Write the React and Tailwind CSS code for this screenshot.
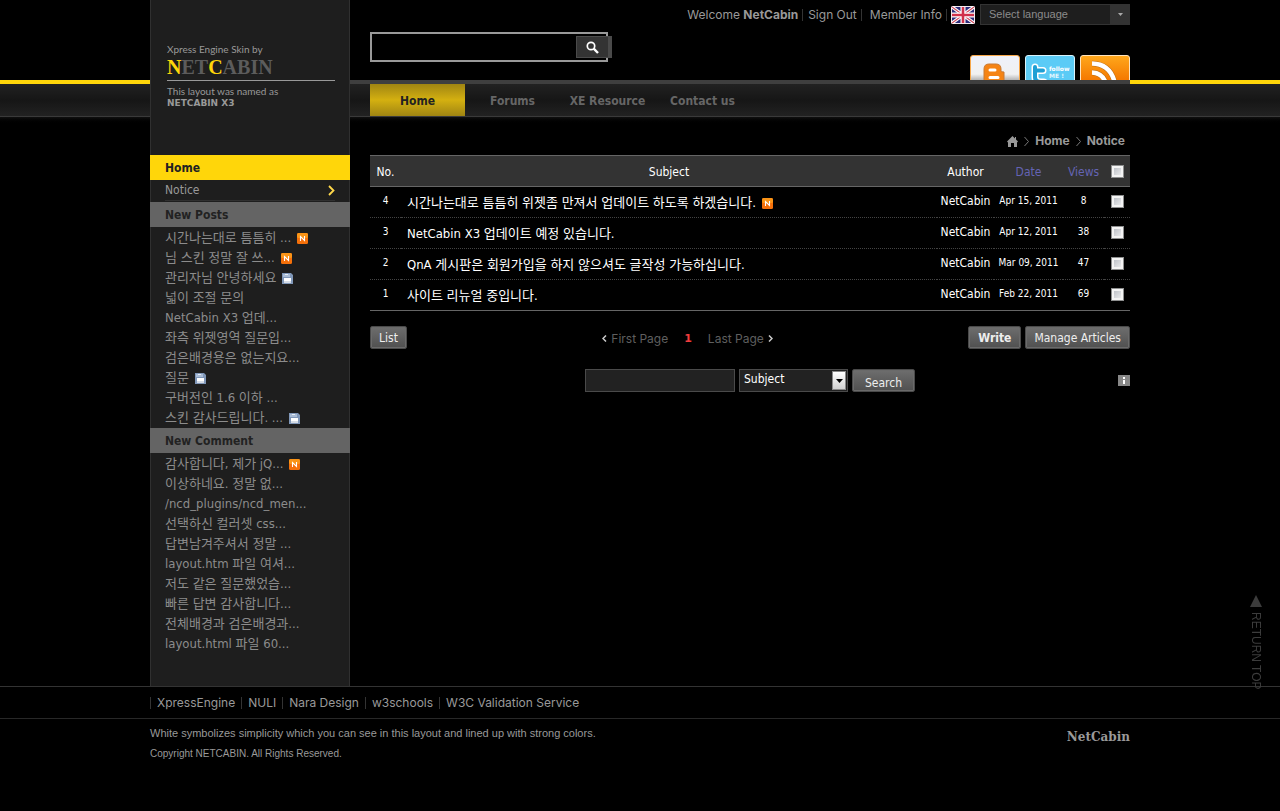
import { useState } from "react"

const newPosts = [
  { text: "시간나는대로 틈틈히 ...", icon: "new" },
  { text: "님 스킨 정말 잘 쓰...", icon: "new" },
  { text: "관리자님 안녕하세요", icon: "file" },
  { text: "넓이 조절 문의" },
  { text: "NetCabin X3 업데..." },
  { text: "좌측 위젯영역 질문입..." },
  { text: "검은배경용은 없는지요..." },
  { text: "질문", icon: "file" },
  { text: "구버전인 1.6 이하 ..." },
  { text: "스킨 감사드립니다. ...", icon: "file" },
]

const newComments = [
  { text: "감사합니다, 제가 jQ...", icon: "new" },
  { text: "이상하네요. 정말 없..." },
  { text: "/ncd_plugins/ncd_men..." },
  { text: "선택하신 컬러셋 css..." },
  { text: "답변남겨주셔서 정말 ..." },
  { text: "layout.htm 파일 여셔..." },
  { text: "저도 같은 질문했었습..." },
  { text: "빠른 답변 감사합니다..." },
  { text: "전체배경과 검은배경과..." },
  { text: "layout.html 파일 60..." },
]

const articles = [
  { no: 4, subject: "시간나는대로 틈틈히 위젯좀 만져서 업데이트 하도록 하겠습니다.", date: "Apr 15, 2011", views: 8, isNew: true },
  { no: 3, subject: "NetCabin X3 업데이트 예정 있습니다.", date: "Apr 12, 2011", views: 38 },
  { no: 2, subject: "QnA 게시판은 회원가입을 하지 않으셔도 글작성 가능하십니다.", date: "Mar 09, 2011", views: 47 },
  { no: 1, subject: "사이트 리뉴얼 중입니다.", date: "Feb 22, 2011", views: 69 },
]

const footerLinks = ["XpressEngine", "NULI", "Nara Design", "w3schools", "W3C Validation Service"]

const checkClass =
  "block size-[13px] appearance-none border border-[#8e8f8f] bg-linear-to-br from-[#b4b8bf] to-[#f6f6f6] shadow-[inset_0_0_0_2px_#f4f4f4] checked:from-[#333] checked:to-[#333]"

const buttonClass =
  "h-[23px] rounded-[2px] border border-[#4a4a4a] bg-linear-to-b from-[#6e6e6e] to-[#505050] text-xs leading-5 text-[#eee] shadow-[inset_0_0_0_1px_#6a6a6a]"

function NewIcon() {
  return (
    <svg className="size-[11px] shrink-0" viewBox="0 0 11 11" aria-hidden="true">
      <rect width="11" height="11" rx="1.5" fill="#f5700a" />
      <rect width="11" height="5" rx="1.5" fill="#fa9417" />
      <path d="M3.500 8V3.500L7.500 7.500V3" fill="none" stroke="#fff" strokeWidth="1.1" />
    </svg>
  )
}

function FileIcon() {
  return (
    <svg className="size-[11px] shrink-0" viewBox="0 0 11 11" aria-hidden="true">
      <path d="M0 0h9l2 2v9H0z" fill="#8097b8" />
      <path d="M1 1h7v3H1z" fill="#a9bcd6" />
      <path d="M3 1h3v1H3z" fill="#e6edf6" />
      <path d="M2 5h7v5H2z" fill="#fff" />
      <path d="M2 8h7v2H2z" fill="#d5dce6" />
    </svg>
  )
}

function Flag() {
  return (
    <svg className="h-[18px] w-6" viewBox="0 0 24 18" role="img" aria-label="English">
      <rect width="24" height="18" rx="1.5" fill="#f4e9ee" />
      <rect x="1" y="1" width="22" height="16" fill="#2b2b7a" />
      <path d="M1 1l22 16M23 1L1 17" stroke="#fff" strokeWidth="3.4" />
      <path d="M1 1l22 16M23 1L1 17" stroke="#cf4a5e" strokeWidth="1.1" />
      <path d="M12 1v16M1 9h22" stroke="#fff" strokeWidth="5" />
      <path d="M12 1v16M1 9h22" stroke="#d0304a" strokeWidth="2.6" />
    </svg>
  )
}

function SocialLinks() {
  return (
    <div className="flex h-[25px] gap-[5px] overflow-hidden">
      <a href="#blog" aria-label="Blog">
        <svg className="h-[25px] w-[50px]" viewBox="0 0 50 25">
          <defs>
            <linearGradient id="blog" x1="0" y1="0" x2="0" y2="1">
              <stop offset="0" stopColor="#eef1fa" />
              <stop offset="0.55" stopColor="#f1f1f1" />
              <stop offset="0.75" stopColor="#a9a9a9" />
            </linearGradient>
          </defs>
          <rect x="0.5" y="0.5" width="49" height="34" rx="2.5" fill="url(#blog)" stroke="#f6a74a" />
          <path d="M14 28V14q0-5 5-5h7q5 0 5 5v2q0 1 3 1v11z" fill="#f58414" stroke="#c87a35" />
          <path d="M20 15h5M20 22.500h8" stroke="#fff" strokeWidth="3" strokeLinecap="round" />
        </svg>
      </a>
      <a href="#twitter" aria-label="Twitter">
        <svg className="h-[25px] w-[50px]" viewBox="0 0 50 25">
          <rect x="0.5" y="0.5" width="49" height="34" rx="2.5" fill="#5bcbf6" stroke="#d8f2fb" />
          <path d="M10 12v10q0 5 6 5h3M10 15.500h8" fill="none" stroke="#fff" strokeWidth="7" strokeLinecap="round" strokeLinejoin="round" />
          <path d="M10 12v10q0 5 6 5h3M10 15.500h8" fill="none" stroke="#1e9fd4" strokeWidth="4" strokeLinecap="round" strokeLinejoin="round" />
          <text x="24" y="16" fontSize="6" fontWeight="bold" fontFamily="DejaVu Sans, sans-serif" fill="#fff">follow</text>
          <text x="24" y="23" fontSize="6" fontWeight="bold" fontFamily="DejaVu Sans, sans-serif" fill="#e4f6fd">ME !</text>
        </svg>
      </a>
      <a href="#rss" aria-label="RSS">
        <svg className="h-[25px] w-[50px]" viewBox="0 0 50 25">
          <defs>
            <linearGradient id="rss" x1="0" y1="0" x2="0" y2="1">
              <stop offset="0" stopColor="#ffa81c" />
              <stop offset="0.7" stopColor="#f57a00" />
            </linearGradient>
          </defs>
          <rect x="0.5" y="0.5" width="49" height="34" rx="2.5" fill="url(#rss)" stroke="#ffe3bd" />
          <path d="M12 8.500Q31 9 35 29M12 17.500Q23 18 26 29" fill="none" stroke="#b96a10" strokeWidth="5.500" />
          <path d="M12 8.500Q31 9 35 29M12 17.500Q23 18 26 29" fill="none" stroke="#fff" strokeWidth="4.500" />
        </svg>
      </a>
    </div>
  )
}

function NavBand({ children, line }) {
  return (
    <div>
      <div className={line + " h-1"} />
      <div className="h-8 bg-linear-to-b from-[#222] via-[#161616] to-[#222]">{children}</div>
      <div className="h-px bg-[#3a3a3a]" />
      <div className="h-2 bg-linear-to-b from-[#101010] to-black" />
    </div>
  )
}

function SideTitle({ children }) {
  return (
    <h2 className="-mx-px h-[25px] bg-[#646464] pl-[15px] text-xs leading-[26px] font-bold text-[#222]">
      {children}
    </h2>
  )
}

function SideList({ items }) {
  return (
    <ul className="pt-px pl-[14px] text-[13px] text-[#8c8c8c]">
      {items.map((item) => (
        <li key={item.text} className="flex h-5 items-center gap-[6px]">
          <a href="#post" className="leading-5">{item.text}</a>
          {item.icon === "new" && <NewIcon />}
          {item.icon === "file" && <FileIcon />}
        </li>
      ))}
    </ul>
  )
}

function Sidebar() {
  return (
    <aside className="w-[200px] shrink-0 border-x border-[#303030] bg-[#1e1e1e] pb-8 font-['DejaVu_Sans_Condensed','Noto_Sans_CJK_KR',sans-serif]">
      <div className="h-[155px] px-4 pt-[42px] font-['Lato',sans-serif] text-[10px] text-[#999]">
        <p className="leading-[14px]">Xpress Engine Skin by</p>
        <h1 className="w-[168px] border-b border-[#999] pb-0.5 font-['Liberation_Serif',serif] text-xl leading-[22px] font-bold text-[#5c5c5c]">
          <span className="text-[#ffd60a]">N</span>ET<span className="text-[#ffd60a]">C</span>ABIN
        </h1>
        <p className="mt-1 leading-3">This layout was named as</p>
        <p className="font-['DejaVu_Sans',sans-serif] text-[9px] leading-3 font-bold">NETCABIN X3</p>
      </div>
      <a href="#home" className="-mx-px block h-[25px] bg-[#ffd60a] pl-[15px] text-xs leading-[26px] font-bold text-[#222]">
        Home
      </a>
      <a href="#notice" className="mx-[14px] mb-px flex h-[21px] items-center justify-between border-b border-[#303030] text-xs text-[#999]">
        Notice
        <svg className="h-[11px] w-[7px]" viewBox="0 0 7 11" fill="none" stroke="#ffd84a" strokeWidth="1.8">
          <path d="M1 1l4.500 4.500L1 10" />
        </svg>
      </a>
      <SideTitle>New Posts</SideTitle>
      <SideList items={newPosts} />
      <SideTitle>New Comment</SideTitle>
      <SideList items={newComments} />
    </aside>
  )
}

function TopBar() {
  return (
    <div className="flex h-[29px] items-center justify-end font-['Inter',sans-serif] text-xs text-[#999]">
      <span>Welcome <b>NetCabin</b></span>
      <a href="#signout" className="ml-1 border-l border-[#333] pl-[5px] leading-3">Sign Out</a>
      <a href="#member" className="ml-1 border-l border-[#333] pl-2 leading-3">Member Info</a>
      <span className="ml-1 h-3 w-px bg-[#333]" />
      <span className="ml-1"><Flag /></span>
      <div className="relative ml-[5px]">
        <select aria-label="Select language" className="block h-[21px] w-[150px] appearance-none border border-[#333] bg-[#1e1e1e] pl-2 font-['Liberation_Sans',sans-serif] text-[11px] text-[#8c8c8c]">
          <option>Select language</option>
          <option>English</option>
          <option>한국어</option>
        </select>
        <span className="pointer-events-none absolute inset-y-0 right-0 flex w-5 items-center justify-center bg-[#333]">
          <svg className="h-[3px] w-[5px]" viewBox="0 0 5 3"><path d="M0 0h5L2.500 3z" fill="#aaa" /></svg>
        </span>
      </div>
    </div>
  )
}

function Board() {
  const [checked, setChecked] = useState([])

  const toggle = (no) => {
    setChecked(checked.includes(no) ? checked.filter((n) => n !== no) : [...checked, no])
  }

  const toggleAll = () => {
    setChecked(checked.length === articles.length ? [] : articles.map((a) => a.no))
  }

  return (
    <section className="font-['DejaVu_Sans_Condensed','Noto_Sans_CJK_KR',sans-serif] text-xs text-white">
      <table className="w-full table-fixed border-collapse text-center">
        <thead>
          <tr className="h-[31px] border-y border-[#666] bg-[#333]">
            <th className="w-[31px] pt-0.5 font-normal">No.</th>
            <th className="pt-0.5 font-normal">Subject</th>
            <th className="w-[57px] pt-0.5 font-normal">Author</th>
            <th className="w-[69px] pt-0.5 font-normal text-[#6464b4]">Date</th>
            <th className="w-[41px] pt-0.5 font-normal text-[#6464b4]">Views</th>
            <th className="w-[26px] pl-[7px]">
              <input type="checkbox" aria-label="Select all" className={checkClass} checked={checked.length === articles.length} onChange={toggleAll} />
            </th>
          </tr>
        </thead>
        <tbody className="border-b border-[#666]">
          {articles.map((a) => (
            <tr key={a.no} className="h-[31px] border-b border-dotted border-[#444] last:border-0">
              <td className="pb-0.5 text-[10px]">{a.no}</td>
              <td className="pt-0.5 pl-[6px] text-left text-[13px]">
                <a href="#article" className="flex items-center gap-[6px] leading-5">
                  {a.subject}
                  {a.isNew && <NewIcon />}
                </a>
              </td>
              <td className="pb-0.5">NetCabin</td>
              <td className="pb-0.5 text-[10px]">{a.date}</td>
              <td className="pb-0.5 text-[10px]">{a.views}</td>
              <td className="pb-0.5 pl-[7px]">
                <input type="checkbox" aria-label={"Select article " + a.no} className={checkClass} checked={checked.includes(a.no)} onChange={() => toggle(a.no)} />
              </td>
            </tr>
          ))}
        </tbody>
      </table>

      <div className="mt-[15px] flex items-center">
        <button className={buttonClass + " px-2"}>List</button>
        <nav className="flex flex-1 items-center justify-center gap-4 pt-0.5 font-['Inter',sans-serif] text-xs text-[#5f5f5f]">
          <a href="#first" className="flex items-center gap-1">
            <svg className="h-[7px] w-[5px]" viewBox="0 0 5 7" fill="none" stroke="#ccc" strokeWidth="1.500"><path d="M4 0.500l-3 3 3 3" /></svg>
            First Page
          </a>
          <b className="pt-0.5 font-['DejaVu_Sans',sans-serif] text-[11px] text-[#f03c3c]">1</b>
          <a href="#last" className="flex items-center gap-1">
            Last Page
            <svg className="h-[7px] w-[5px]" viewBox="0 0 5 7" fill="none" stroke="#ccc" strokeWidth="1.500"><path d="M1 0.500l3 3-3 3" /></svg>
          </a>
        </nav>
        <div className="flex gap-1">
          <button className={buttonClass + " px-[9px] font-bold"}>Write</button>
          <button className={buttonClass + " px-2"}>Manage Articles</button>
        </div>
      </div>

      <form className="mt-5 grid grid-cols-[1fr_auto_1fr] items-center" onSubmit={(e) => e.preventDefault()}>
        <span />
        <div className="flex gap-1">
          <input type="text" aria-label="Keyword" className="h-[23px] w-[150px] border border-[#4a4a4a] bg-[#222] px-1" />
          <div className="relative">
            <select aria-label="Search target" className="block h-[23px] w-[109px] appearance-none border border-[#4a4a4a] bg-[#222] pb-[3px] pl-1 text-white">
              <option>Subject</option>
              <option>Content</option>
            </select>
            <span className="pointer-events-none absolute inset-y-[2px] right-[2px] flex w-[14px] items-center justify-center border border-[#888] bg-linear-to-b from-white to-[#d0d0d0]">
              <svg className="h-1 w-[7px]" viewBox="0 0 7 4"><path d="M0 0h7L3.500 4z" fill="#000" /></svg>
            </span>
          </div>
          <button className={buttonClass + " w-[63px] pt-[3px]"}>Search</button>
        </div>
        <a href="#info" aria-label="Information" className="justify-self-end">
          <svg className="h-[11px] w-3" viewBox="0 0 12 11">
            <rect width="12" height="11" fill="#888" />
            <path d="M5 2h2v2H5zM5 5h2v4H5z" fill="#fff" />
          </svg>
        </a>
      </form>
    </section>
  )
}

function Footer() {
  return (
    <footer className="border-t border-[#333] text-[#999]">
      <div className="border-b border-[#282828]">
        <ul className="mx-auto flex h-[31px] w-[980px] items-center gap-[6px] font-['Inter',sans-serif] text-xs">
          {footerLinks.map((link) => (
            <li key={link} className="border-l border-[#333] pl-[6px] leading-3">
              <a href="#link">{link}</a>
            </li>
          ))}
        </ul>
      </div>
      <div className="mx-auto flex w-[980px] justify-between pt-1 font-['Liberation_Sans',sans-serif]">
        <div className="space-y-px">
          <p className="text-[11px] leading-5">White symbolizes simplicity which you can see in this layout and lined up with strong colors.</p>
          <p className="text-[10px] leading-5">Copyright NETCABIN. All Rights Reserved.</p>
        </div>
        <p className="pt-1 font-['DejaVu_Serif',serif] text-xs leading-5 font-bold">NetCabin</p>
      </div>
    </footer>
  )
}

export default function App() {
  return (
    <div className="relative min-h-screen bg-black">
      <div className="flex">
        <div className="flex-1 pt-20">
          <NavBand line="bg-[#ffd60a]" />
        </div>

        <div className="flex w-[980px]">
          <Sidebar />
          <main className="min-w-0 flex-1">
            <div className="flex h-20 flex-col justify-between pl-5">
              <TopBar />
              <div className="flex h-[50px] items-end justify-between">
                <form className="mb-[18px] flex items-center" onSubmit={(e) => e.preventDefault()}>
                  <input type="text" aria-label="Search the site" className="h-[30px] w-[238px] border-2 border-[#999] bg-black px-2 text-sm text-white" />
                  <button aria-label="Search" className="z-10 -ml-8 flex h-[22px] w-9 items-center justify-center border border-r-4 border-[#4a4a4a] bg-[#333]">
                    <svg className="size-[13px]" viewBox="0 0 13 13" fill="none" stroke="#fff">
                      <circle cx="5" cy="5" r="3.700" strokeWidth="1.700" />
                      <path d="M7.700 7.700l4.300 4.300" strokeWidth="2.400" />
                    </svg>
                  </button>
                </form>
                <SocialLinks />
              </div>
            </div>
            <NavBand line="bg-[#3f3f3f]">
              <nav className="flex h-8 pl-5 text-center font-['DejaVu_Sans_Condensed',sans-serif] text-xs leading-[34px] font-bold text-[#666]">
                <a href="#home" className="h-8 w-[95px] bg-linear-to-b from-[#a08512] via-[#d4b010] to-[#a08512] text-[#222]">Home</a>
                <a href="#forums" className="w-[95px]">Forums</a>
                <a href="#resource" className="w-[95px]">XE Resource</a>
                <a href="#contact" className="w-[95px]">Contact us</a>
              </nav>
            </NavBand>
            <div className="pl-5">
              <div className="flex h-[30px] items-center justify-end gap-[6px] pt-[2px] pr-[5px] font-['Inter',sans-serif] text-xs font-bold text-[#999]">
                <svg className="size-[11px]" viewBox="0 0 11 11" fill="#999">
                  <path d="M5.500 0L0 5.500l1 1V11h3V7h3v4h3V6.500l1-1L9 3.500V1H8v1.500z" />
                </svg>
                <svg className="h-[9px] w-[5px]" viewBox="0 0 5 9" fill="none" stroke="#777"><path d="M0.500 0l4 4.500-4 4.500" /></svg>
                <a href="#home">Home</a>
                <svg className="h-[9px] w-[5px]" viewBox="0 0 5 9" fill="none" stroke="#777"><path d="M0.500 0l4 4.500-4 4.500" /></svg>
                <a href="#notice">Notice</a>
              </div>
              <Board />
            </div>
          </main>
        </div>

        <div className="flex-1 pt-20">
          <NavBand line="bg-[#ffd60a]" />
        </div>
      </div>

      <Footer />

      <a href="#top" className="fixed right-4 bottom-[121px] flex flex-col items-center gap-[5px] font-['Liberation_Sans',sans-serif] text-xs text-[#3c3c3c]">
        <svg className="size-3" viewBox="0 0 12 12"><path d="M6 0l6 12H0z" fill="#3c3c3c" /></svg>
        <span className="leading-4 [writing-mode:vertical-rl]">RETURN TOP</span>
      </a>
    </div>
  )
}
